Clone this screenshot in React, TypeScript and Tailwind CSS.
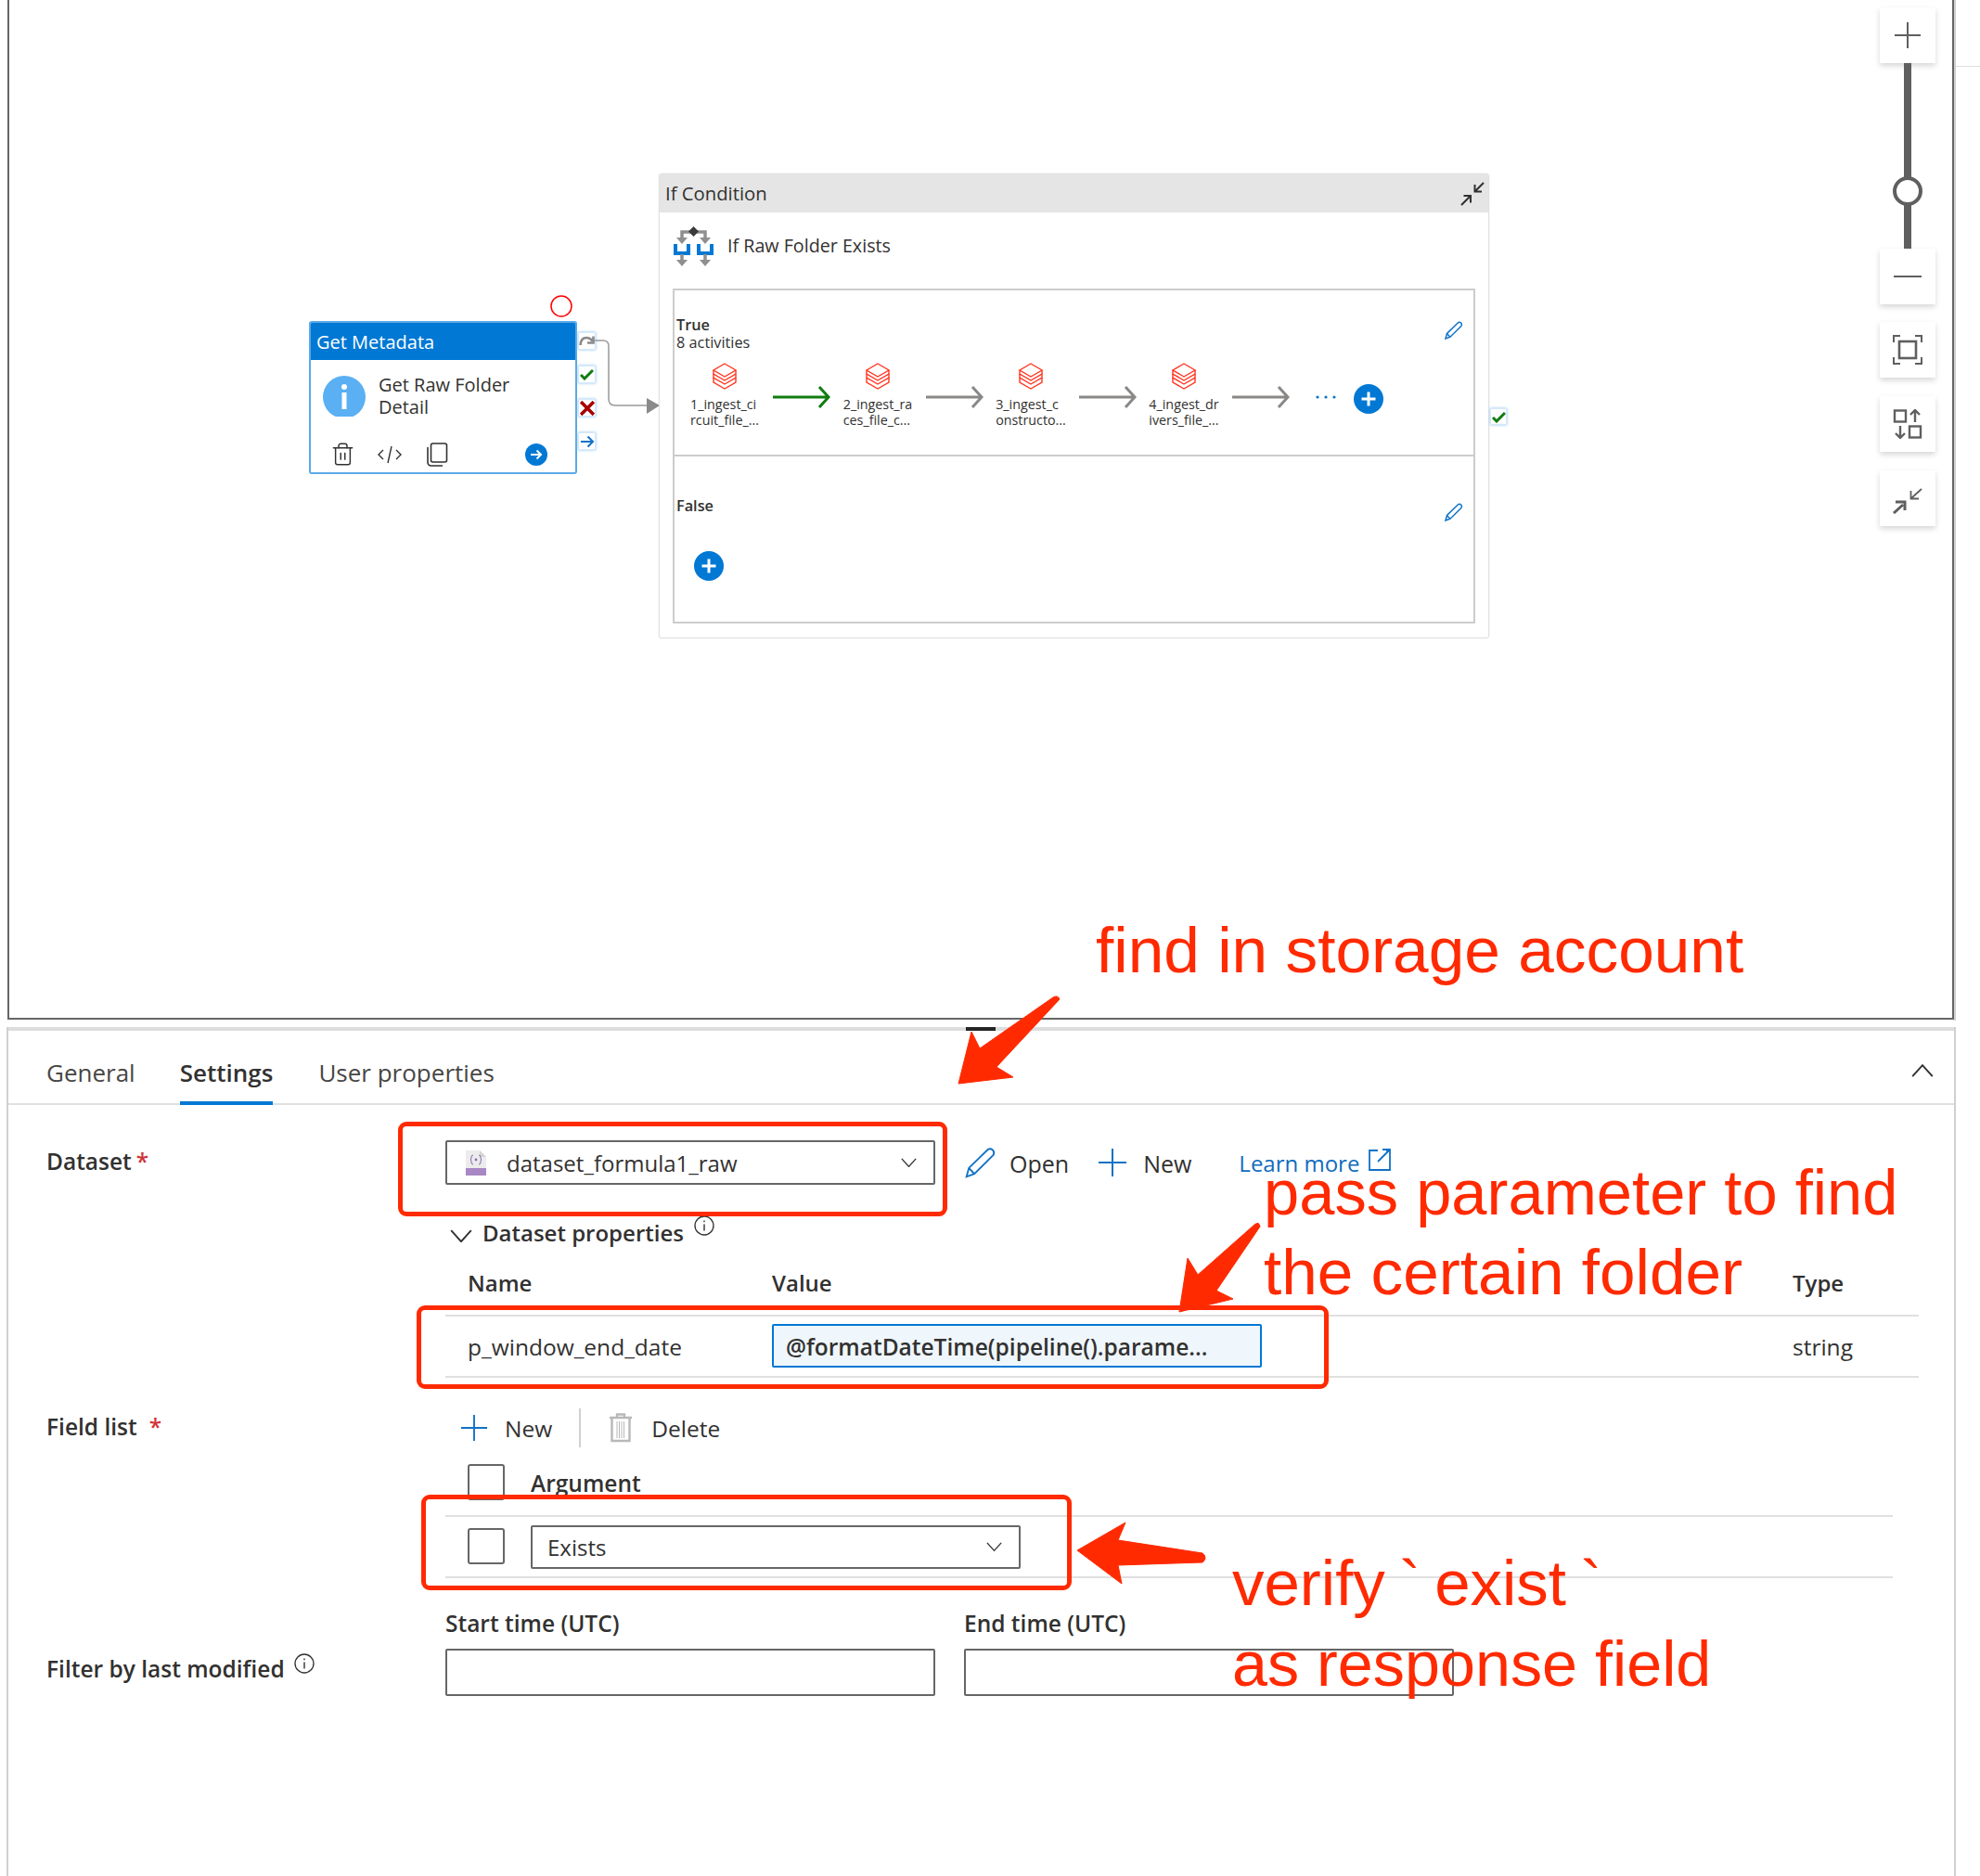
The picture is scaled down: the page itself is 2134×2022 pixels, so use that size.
import { Trash2 } from 'lucide-react';

const sans = "font-['Open_Sans','Noto_Sans',sans-serif]";

function DatabricksIcon() {
  return (
    <svg width="28" height="30" viewBox="0 0 28 30" fill="none" stroke="#ff3621" strokeWidth="1.4">
      <path d="M14 1 L26 8 L14 15 L2 8 Z" />
      <path d="M2 8 V12 L14 19 L26 12 V8" />
      <path d="M2 12 V16 L14 23 L26 16 V12" />
      <path d="M2 16 V21 L14 28 L26 21 V16" />
    </svg>
  );
}

function FlowArrow({ color = '#8a8886' }: { color?: string }) {
  return (
    <svg width="62" height="24" viewBox="0 0 62 24" fill="none" stroke={color} strokeWidth="3" className="mt-[25px] shrink-0">
      <path d="M0 12 H60 M50 1 L60 12 L50 23" />
    </svg>
  );
}

function PlusCircle({ className }: { className?: string }) {
  return (
    <svg width="32" height="32" viewBox="0 0 32 32" className={className}>
      <circle cx="16" cy="16" r="16" fill="#0078d4" />
      <path d="M16 8.5 V23.5 M8.5 16 H23.5" stroke="white" strokeWidth="3" />
    </svg>
  );
}

function Pencil({ size = 20, width = 1.5 }: { size?: number; width?: number }) {
  return (
    <svg width={size} height={size} viewBox="0 0 20 20" fill="none" stroke="#0f72c6" strokeWidth={width} className="shrink-0">
      <path d="M1 19 L2.5 13.5 L14.5 1.8 Q16 0.7 17.6 2 Q19 3.6 18 5.2 L6 17.2 Z M2.5 13.5 L6 17.2" />
    </svg>
  );
}

function Chevron({ up, size = 18 }: { up?: boolean; size?: number }) {
  return (
    <svg width={size} height={size * 0.6} viewBox="0 0 20 12" fill="none" stroke="#323130" strokeWidth="1.6" className="shrink-0">
      <path d={up ? 'M1 11 L10 1 L19 11' : 'M1 1 L10 11 L19 1'} />
    </svg>
  );
}

function InfoMark({ size = 22 }: { size?: number }) {
  return (
    <svg width={size} height={size} viewBox="0 0 22 22" fill="none" stroke="#323130" className="shrink-0">
      <circle cx="11" cy="11" r="10" strokeWidth="1.3" />
      <path d="M11 9.5 V16.5 M11 5.5 V7.2" strokeWidth="1.4" />
    </svg>
  );
}

function BluePlus({ size = 32 }: { size?: number }) {
  return (
    <svg width={size} height={size} viewBox="0 0 32 32" stroke="#0f72c6" strokeWidth="2" className="shrink-0">
      <path d="M16 1 V31 M1 16 H31" />
    </svg>
  );
}

function SideButton({ top, left, children }: { top: string; left: string; children: React.ReactNode }) {
  return (
    <div
      className={`absolute ${top} ${left} flex h-[19px] w-[19px] items-center justify-center border border-[#d5e9fa] bg-white shadow-[0_0_3px_#8cc4f2]`}
    >
      {children}
    </div>
  );
}

function RailButton({ children, className = '' }: { children: React.ReactNode; className?: string }) {
  return (
    <div className={`flex h-[60px] w-[60px] items-center justify-center bg-white shadow-[0_3px_6px_rgba(0,0,0,0.16)] ${className}`}>
      {children}
    </div>
  );
}

const items = [
  ['1_ingest_ci', 'rcuit_file_...'],
  ['2_ingest_ra', 'ces_file_c...'],
  ['3_ingest_c', 'onstructo...'],
  ['4_ingest_dr', 'ivers_file_...'],
];

function Canvas() {
  return (
    <div className="relative h-[1100px] w-full">
      <div className="absolute left-[8px] top-[-4px] h-[1103px] w-[2098px] border-x-2 border-b-2 border-[#666666]" />
      <div className="absolute left-[2106px] top-0 h-[1100px] w-[2px] bg-[#d0d0d0]" />
      <div className="absolute left-[2108px] top-[71px] h-[1px] w-[26px] bg-[#e0e0e0]" />

      {/* Get Metadata activity */}
      <svg className="absolute left-[593px] top-[318px]" width="24" height="24" fill="none" stroke="#ff0000" strokeWidth="1.5">
        <circle cx="12" cy="12" r="11" />
      </svg>
      <div className="absolute left-[333px] top-[346px] h-[165px] w-[289px] overflow-hidden rounded-[3px] border-2 border-[#5aa9e6] bg-white">
        <div className="flex h-[40px] items-center bg-[#0078d4] pl-[6px] pt-[2px] text-[20px] text-white">Get Metadata</div>
        <div className="flex h-[78px]">
          <div className="ml-[13px] mt-[17px] h-[44px] w-[46px] overflow-hidden">
            <svg width="46" height="46" viewBox="0 0 46 46">
              <circle cx="23" cy="23" r="23" fill="#5ab0f2" />
              <circle cx="23" cy="12" r="3" fill="white" />
              <rect x="20.5" y="18" width="5" height="18" fill="white" />
            </svg>
          </div>
          <div className="ml-[14px] mt-[15px] text-[20px] leading-[24px] text-[#323130]">
            Get Raw Folder
            <br />
            Detail
          </div>
        </div>
        <div className="flex items-center pl-[21px] pt-[10px]">
          <Trash2 size={27} strokeWidth={1.3} color="#323130" />
          <svg className="ml-[24px]" width="26" height="20" viewBox="0 0 26 20" fill="none" stroke="#323130" strokeWidth="1.4">
            <path d="M6 5 L1 10 L6 15 M20 5 L25 10 L20 15 M15 1 L11 19" />
          </svg>
          <svg className="ml-[26px]" width="24" height="26" viewBox="0 0 24 26" fill="none" stroke="#323130" strokeWidth="1.6">
            <rect x="5.5" y="1" width="17" height="20" rx="2" />
            <path d="M2 5 V21 Q2 25 6 25 H18" />
          </svg>
          <svg className="ml-[83px]" width="24" height="24" viewBox="0 0 24 24" fill="none" stroke="white" strokeWidth="2">
            <circle cx="12" cy="12" r="12" fill="#0078d4" stroke="none" />
            <path d="M6 12 H17 M12.5 7.5 L17 12 L12.5 16.5" />
          </svg>
        </div>
      </div>

      <SideButton top="top-[358px]" left="left-[623px]">
        <svg width="17" height="13" viewBox="0 0 17 13" fill="none" stroke="#8a8a8a" strokeWidth="2.6">
          <path d="M1.5 11 Q2 3 8 3 Q12 3 14.5 6.5 M15.5 1.5 V8.5 H9" />
        </svg>
      </SideButton>
      <SideButton top="top-[394px]" left="left-[623px]">
        <svg width="15" height="13" viewBox="0 0 15 13" fill="none" stroke="#107c10" strokeWidth="3">
          <path d="M1 7 L5 11 L14 2" />
        </svg>
      </SideButton>
      <SideButton top="top-[430px]" left="left-[623px]">
        <svg width="16" height="16" viewBox="0 0 15 15" fill="none" stroke="#a80000" strokeWidth="3.4">
          <path d="M1 1 L14 14 M14 1 L1 14" />
        </svg>
      </SideButton>
      <SideButton top="top-[466px]" left="left-[623px]">
        <svg width="16" height="14" viewBox="0 0 16 14" fill="none" stroke="#0f72c6" strokeWidth="2">
          <path d="M1 7 H14 M8.5 1.5 L14 7 L8.5 12.5" />
        </svg>
      </SideButton>

      <svg className="absolute left-[640px] top-[360px]" width="72" height="90" fill="none">
        <path d="M0 7 H10 Q16 7 16 13 V70 Q16 77 23 77 H60" stroke="#999999" strokeWidth="1.5" />
        <path d="M57 69 L71 77 L57 86 Z" fill="#8a8a8a" />
      </svg>

      {/* If Condition container */}
      <div className="absolute left-[710px] top-[187px] h-[501px] w-[895px] rounded-[3px] border border-[#e1e1e1] bg-white shadow-[0_0_2px_rgba(0,0,0,0.12)]">
        <div className="flex h-[41px] items-center justify-between bg-[#e5e5e5] pl-[6px] pr-[4px] text-[20.3px] text-[#323130]">
          If Condition
          <svg width="26" height="26" viewBox="0 0 26 26" fill="none" stroke="#323130" strokeWidth="2">
            <path d="M1 25 L10 16 M3.5 15 H11 V22.5 M25 1 L16 10 M15.5 3 V10.5 H23" />
          </svg>
        </div>
        <div className="flex h-[82px] items-start pl-[15px] pt-[15px]">
          <svg width="43" height="44" viewBox="0 0 43 44" fill="none">
            <path d="M9 13 V6 H34 V13" stroke="#8f8f8f" strokeWidth="3.5" />
            <path d="M3 12 H15 L9 19 Z M28 12 H40 L34 19 Z" fill="#8f8f8f" />
            <path d="M21.5 0 L27 5.5 L21.5 11 L16 5.5 Z" fill="#3b3b3b" />
            <path d="M2 19 V29 H16 V19 M27 19 V29 H41 V19" stroke="#0078d4" strokeWidth="4" />
            <path d="M9 30 V36 M34 30 V36" stroke="#8f8f8f" strokeWidth="3.5" />
            <path d="M3 36 H15 L9 43 Z M28 36 H40 L34 43 Z" fill="#8f8f8f" />
          </svg>
          <span className="ml-[15px] mt-[7px] text-[19.7px] leading-[28px] text-[#323130]">If Raw Folder Exists</span>
        </div>
        <div className="mx-[14px] border-2 border-[#cccccc]">
          <div className="h-[179px] border-b-2 border-[#cccccc] text-[#323130]">
            <div className="flex items-start justify-between pl-[2px] pr-[11px] pt-[28px]">
              <div className="text-[16.3px] leading-[19px]">
                <div className="font-semibold">True</div>
                <div>8 activities</div>
              </div>
              <div className="mt-[5px]"><Pencil /></div>
            </div>
            <div className="mt-[12px] flex items-start pl-[18px]">
              {items.map((lines, i) => (
                <div key={lines[0]} className="flex items-start">
                  <div className="mr-[16px] flex w-[72px] flex-col items-center">
                    <DatabricksIcon />
                    <div className="mt-[6px] whitespace-nowrap text-[14.3px] leading-[17px]">
                      {lines[0]}
                      <br />
                      {lines[1]}
                    </div>
                  </div>
                  <FlowArrow color={i === 0 ? '#107c10' : '#8a8886'} />
                  <div className="w-[15px]" />
                </div>
              ))}
              <svg className="ml-[13px] mt-[35px]" width="22" height="4" viewBox="0 0 22 4" fill="#0f72c6">
                <circle cx="2" cy="2" r="1.6" />
                <circle cx="11" cy="2" r="1.6" />
                <circle cx="20" cy="2" r="1.6" />
              </svg>
              <PlusCircle className="ml-[19px] mt-[23px]" />
            </div>
          </div>
          <div className="h-[178px] text-[#323130]">
            <div className="flex items-start justify-between pl-[2px] pr-[11px] pt-[44px]">
              <div className="text-[16.3px] font-semibold leading-[19px]">False</div>
              <div className="mt-[6px]"><Pencil /></div>
            </div>
            <PlusCircle className="ml-[21px] mt-[32px]" />
          </div>
        </div>
      </div>

      <div className="absolute left-[1606px] top-[440px] flex h-[18px] w-[18px] items-center justify-center border border-[#d5e9fa] bg-white shadow-[0_0_3px_#8cc4f2]">
        <svg width="15" height="13" viewBox="0 0 15 13" fill="none" stroke="#107c10" strokeWidth="3">
          <path d="M1 7 L5 11 L14 2" />
        </svg>
      </div>

      {/* Zoom rail */}
      <div className="absolute left-[2026px] top-[8px] flex flex-col items-center">
        <RailButton>
          <svg width="30" height="30" viewBox="0 0 30 30" stroke="#5f5f5f" strokeWidth="2"><path d="M15 1 V29 M1 15 H29" /></svg>
        </RailButton>
        <div className="relative h-[200px] w-[8px] bg-[#5f5f5f]">
          <div className="absolute left-[-12px] top-[122px] h-[32px] w-[32px] rounded-full border-4 border-[#5f5f5f] bg-white" />
        </div>
        <RailButton>
          <div className="h-[2px] w-[30px] bg-[#5f5f5f]" />
        </RailButton>
        <RailButton className="mt-[19px]">
          <svg width="32" height="32" viewBox="0 0 32 32" fill="none" stroke="#5f5f5f" strokeWidth="2">
            <path d="M1 8 V1 H8 M24 1 H31 V8 M31 24 V31 H24 M8 31 H1 V24" />
            <rect x="7" y="7" width="18" height="18" strokeWidth="2.6" />
          </svg>
        </RailButton>
        <RailButton className="mt-[20px]">
          <svg width="32" height="32" viewBox="0 0 32 32" fill="none" stroke="#5f5f5f" strokeWidth="2.4">
            <rect x="2" y="1.5" width="12" height="12" />
            <rect x="18" y="18.5" width="12" height="12" />
            <path d="M8 18 V31 M3 26 L8 31 L13 26 M24 1 V14 M19 6 L24 1 L29 6" />
          </svg>
        </RailButton>
        <RailButton className="mt-[20px]">
          <svg className="mt-[5px]" width="32" height="28" viewBox="0 0 32 28" fill="none" stroke="#5f5f5f" strokeWidth="1.8">
            <path d="M1 27 L11 18 M3 15 H13 V24" strokeWidth="3" />
            <path d="M31 1 L20 11 M19.5 3 V11.5 H28" />
          </svg>
        </RailButton>
      </div>
    </div>
  );
}

function Required({ className }: { className: string }) {
  return <span className={`text-[#d13438] ${className}`}>*</span>;
}

function Select({ className, children }: { className: string; children: React.ReactNode }) {
  return (
    <div className={`flex items-center justify-between rounded-[2px] border-2 border-[#666666] ${className}`}>
      {children}
    </div>
  );
}

function DeleteIcon() {
  return (
    <svg width="26" height="32" viewBox="0 0 26 32" fill="none" stroke="#b8b8b8" className="shrink-0">
      <path d="M9 4 V1.5 H17 V4 M1 5 H25" strokeWidth="2.4" />
      <path d="M3.5 6 V30 H22.5 V6" strokeWidth="2.4" />
      <path d="M9 9 V27 M11.5 9 V27 M14 9 V27 M16.5 9 V27" strokeWidth="1" />
    </svg>
  );
}

function Panel() {
  return (
    <div className="ml-[7px] h-[922px] w-[2101px] border-x-2 border-[#d0d0d0] text-[24.5px] leading-[32px] text-[#323130]">
      <div className="relative mt-[7px] h-[4px] bg-[#dddddd]">
        <div className="absolute left-[1032px] top-0 h-[4px] w-[32px] bg-[#252525]" />
      </div>

      <div className="flex h-[80px] items-start border-b-2 border-[#e0e0e0] pl-[41px] pr-[22px] text-[26px]">
        <div className="pt-[29px] text-[#484644]">General</div>
        <div className="ml-[48px] h-[80px] border-b-4 border-[#0078d4] pt-[29px] font-semibold">Settings</div>
        <div className="ml-[49px] pt-[29px] text-[#484644]">User properties</div>
        <div className="ml-auto pt-[36px]"><Chevron up size={24} /></div>
      </div>

      <div className="mt-[38px] flex items-start pl-[41px]">
        <div className="w-[430px] pt-[7px] font-semibold">
          Dataset<Required className="ml-[5px]" />
        </div>
        <div>
          <div className="flex items-center">
            <Select className="h-[48px] w-[528px] pl-[20px] pr-[18px]">
              <div className="flex items-center gap-[22px]">
                <svg width="22" height="27" viewBox="0 0 22 27">
                  <path d="M0 0 H15 L22 7 V19 H0 Z" fill="#ececec" />
                  <path d="M15 0 L22 7 H15 Z" fill="#d4d4d4" />
                  <rect y="19" width="22" height="8" fill="#a987c4" />
                  <path d="M8 5 Q6 5 6 7 V9 L5 10 L6 11 V13 Q6 15 8 15 M14 5 Q16 5 16 7 V9 L17 10 L16 11 V13 Q16 15 14 15" fill="none" stroke="#8a6bab" strokeWidth="1" />
                  <circle cx="11" cy="10" r="1.4" fill="#8a6bab" />
                </svg>
                <span className="mt-[2px] text-[24px]">dataset_formula1_raw</span>
              </div>
              <Chevron size={17} />
            </Select>
            <div className="ml-[32px]"><Pencil size={34} width={1.1} /></div>
            <span className="ml-[14px] mt-[2px] text-[25px]">Open</span>
            <div className="ml-[31px]"><BluePlus /></div>
            <span className="ml-[17px] mt-[2px] text-[25px]">New</span>
            <span className="ml-[51px] mt-[2px] text-[24px] text-[#0f6cbd]">Learn more</span>
            <svg className="ml-[10px] -mt-[6px]" width="24" height="24" viewBox="0 0 24 24" fill="none" stroke="#0f72c6" strokeWidth="1.8">
              <path d="M10 2 H1 V23 H23 V2 H19 M10 14 L22 2 M15 1 H23 V8" />
            </svg>
          </div>

          <div className="mt-[36px] flex items-start pl-[5px]">
            <div className="pt-[12px]"><Chevron size={24} /></div>
            <span className="ml-[11px] text-[24px] font-semibold">Dataset properties</span>
            <div className="ml-[11px] -mt-[3px]"><InfoMark /></div>
          </div>

          <div className="mt-[22px] w-[1588px]">
            <div className="flex h-[52px] border-b-2 border-[#e0e0e0] pl-[24px] text-[24px] font-semibold">
              <div className="w-[328px]">Name</div>
              <div className="w-[1100px]">Value</div>
              <div>Type</div>
            </div>
            <div className="flex h-[66px] items-start border-b-2 border-[#e0e0e0] pl-[24px] pt-[8px]">
              <div className="w-[328px] pt-[9px]">p_window_end_date</div>
              <div className="h-[47px] w-[528px] rounded-[2px] border-2 border-[#0078d4] bg-[#eff6fc] pl-[13px] pt-[7px] font-semibold">
                @formatDateTime(pipeline().parame...
              </div>
              <div className="ml-[572px] pt-[9px]">string</div>
            </div>
          </div>
        </div>
      </div>

      <div className="mt-[33px] flex items-start pl-[41px]">
        <div className="w-[430px] pt-[4px] font-semibold">
          Field list<Required className="ml-[13px]" />
        </div>
        <div className="w-[1560px]">
          <div className="flex h-[42px] items-center pl-[16px]">
            <BluePlus size={30} />
            <span className="ml-[18px] mt-[2px]">New</span>
            <div className="ml-[29px] h-[42px] w-[2px] bg-[#d0d0d0]" />
            <div className="ml-[30px]"><DeleteIcon /></div>
            <span className="ml-[20px] mt-[2px]">Delete</span>
          </div>
          <div className="mt-[18px] flex h-[57px] items-start border-b-2 border-[#e0e0e0] pl-[24px]">
            <div className="h-[39px] w-[40px] rounded-[3px] border-2 border-[#666666]" />
            <span className="ml-[28px] mt-[5px] font-semibold">Argument</span>
          </div>
          <div className="flex h-[66px] items-start border-b-2 border-[#e0e0e0] pl-[24px] pt-[9px]">
            <div className="mt-[3px] h-[39px] w-[40px] rounded-[3px] border-2 border-[#666666]" />
            <Select className="ml-[28px] h-[47px] w-[528px] pl-[16px] pr-[18px]">
              <span className="text-[24px]">Exists</span>
              <Chevron size={17} />
            </Select>
          </div>
        </div>
      </div>

      <div className="mt-[33px] flex items-start pl-[41px]">
        <div className="mt-[49px] flex w-[430px] items-start font-semibold">
          Filter by last modified
          <div className="ml-[10px] -mt-[1px]"><InfoMark /></div>
        </div>
        <div className="flex gap-[31px]">
          {['Start time (UTC)', 'End time (UTC)'].map((label) => (
            <div key={label} className="w-[528px]">
              <div className="font-semibold">{label}</div>
              <div className="mt-[11px] h-[51px] rounded-[2px] border-2 border-[#666666]" />
            </div>
          ))}
        </div>
      </div>
    </div>
  );
}

function RedBox({ className }: { className: string }) {
  return <div className={`absolute rounded-[9px] border-[5px] border-[#ff2a00] ${className}`} />;
}

function Annotations() {
  const note = "absolute whitespace-nowrap font-['Liberation_Sans',Arial,sans-serif] leading-[88px] text-[#ff2a00]";
  return (
    <>
      <RedBox className="left-[429px] top-[1209px] h-[102px] w-[592px]" />
      <RedBox className="left-[449px] top-[1407px] h-[90px] w-[983px]" />
      <RedBox className="left-[454px] top-[1611px] h-[103px] w-[701px]" />

      <svg className="absolute left-0 top-0" width="2134" height="2022" fill="#ff2a00" stroke="#ff2a00" strokeWidth="1" strokeLinejoin="round">
        <path d="M1135 1075 Q1140 1072 1142 1077 L1074 1150 L1092 1161 L1033 1168 L1047 1112 L1056 1130 Z" />
        <path d="M1352 1320 Q1357 1316 1358 1322 L1311 1391 L1329 1400 L1271 1414 L1280 1356 L1291 1374 Z" />
        <path d="M1161 1671 L1213 1641 L1205 1660 L1296 1674 Q1302 1679 1296 1684 L1205 1687 L1209 1707 Z" />
      </svg>

      <div className={`${note} left-[1181px] top-[980px] text-[69.4px]`}>find in storage account</div>
      <div className={`${note} left-[1362px] top-[1242px] text-[68.7px]`}>pass parameter to find</div>
      <div className={`${note} left-[1362px] top-[1327px] text-[69.3px]`}>the certain folder</div>
      <div className={`${note} left-[1328px] top-[1663px] text-[69px] [word-spacing:-4px]`}>verify ` exist `</div>
      <div className={`${note} left-[1328px] top-[1749px] text-[68.3px]`}>as response field</div>
    </>
  );
}

export default function App() {
  return (
    <div className={`relative h-[2022px] w-[2134px] overflow-hidden bg-white ${sans}`}>
      <Canvas />
      <Panel />
      <Annotations />
    </div>
  );
}
